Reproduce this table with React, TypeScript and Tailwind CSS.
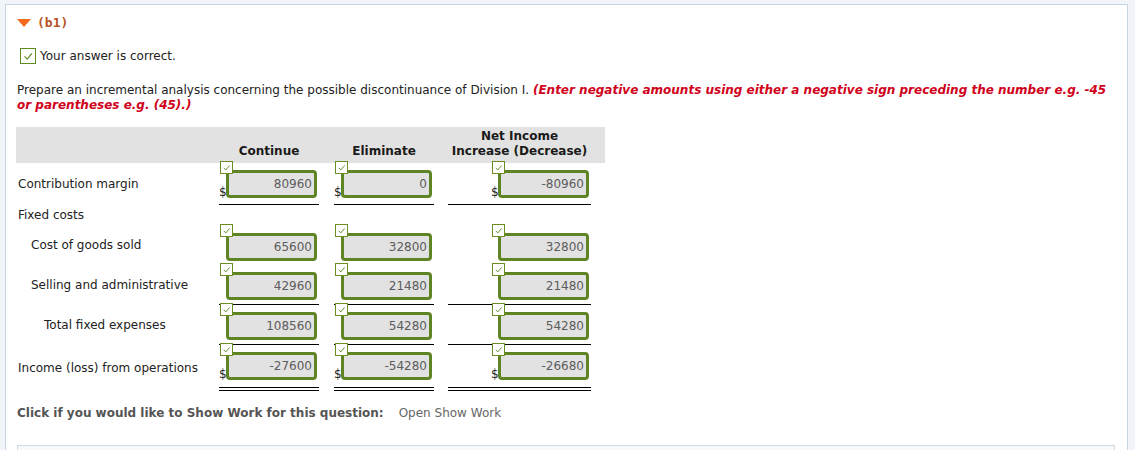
import React from 'react';

type Row = {
  label: string;
  indent: string;
  values?: [string, string, string];
  dollar?: boolean;
  line?: 'single' | 'double';
  pad: string;
};

const rows: Row[] = [
  { label: 'Contribution margin', indent: 'pl-[2px]', values: ['80960', '0', '-80960'], dollar: true, line: 'single', pad: 'pt-[7px] pb-[6px]' },
  { label: 'Fixed costs', indent: 'pl-[2px]', pad: 'h-[20px]' },
  { label: 'Cost of goods sold', indent: 'pl-[15px]', values: ['65600', '32800', '32800'], pad: 'pt-[8px] pb-[4px]' },
  { label: 'Selling and administrative', indent: 'pl-[15px]', values: ['42960', '21480', '21480'], line: 'single', pad: 'pt-[7px] pb-[4px]' },
  { label: 'Total fixed expenses', indent: 'pl-[28px]', values: ['108560', '54280', '54280'], line: 'single', pad: 'pt-[7px] pb-[4px]' },
  { label: 'Income (loss) from operations', indent: 'pl-[2px]', values: ['-27600', '-54280', '-26680'], dollar: true, line: 'double', pad: 'pt-[7px] pb-[7px]' },
];

const Tick = ({ size }: { size: number }) => (
  <svg width={size} height={size} viewBox="0 0 16 16">
    <path d="M4 8.5 L7 11.5 L12.5 5" fill="none" stroke="#5e8c21" strokeWidth="1.4" />
  </svg>
);

const AnswerBox = ({ value, dollar }: { value: string; dollar?: boolean }) => (
  <div className="relative mr-[2px] ml-auto w-[91px]">
    <span className="absolute left-[-6px] top-[-9px] z-10 flex h-[13px] w-[13px] items-center justify-center border border-[#6b8e23] bg-white">
      <Tick size={11} />
    </span>
    {dollar && <span className="absolute bottom-[0px] left-[-7px] text-[12px] leading-none text-[#222]">$</span>}
    <div className="flex h-[28px] w-[91px] items-center justify-end rounded-[4px] border-[3px] border-[#5f8424] bg-[#e2e2e2] pr-[2px] text-[12px] text-[#5c5c5c]">
      {value}
    </div>
  </div>
);

export default function App() {
  const lineClass = (r: Row) =>
    r.line === 'single' ? 'border-b border-black' : r.line === 'double' ? 'border-b-[4px] border-double border-black' : '';

  return (
    <div className="h-[450px] overflow-hidden bg-[#f1f5f9] pl-[5px] pt-[4px] pr-[7px] font-['DejaVu_Sans',sans-serif] text-[12px] text-[#222]">
      <div className="h-[460px] border-l border-t border-r border-[#c9d5e1] bg-white px-[11px] pt-[8px]">
        <div className="flex items-center gap-[6px]">
          <svg width="14" height="8" viewBox="0 0 14 8">
            <polygon points="0,0 14,0 7,8" fill="#f26b1d" />
          </svg>
          <span className="font-['DejaVu_Sans_Mono',monospace] text-[13px] font-bold text-[#b5541f]">(b1)</span>
        </div>

        <div className="mt-[14px] flex items-center gap-[4px] pl-[3px]">
          <span className="flex h-[16px] w-[16px] items-center justify-center border border-[#5e8c21] bg-white">
            <Tick size={14} />
          </span>
          <span>Your answer is correct.</span>
        </div>

        <div className="mt-[18px] w-[1100px] leading-[15px]">
          <span>Prepare an incremental analysis concerning the possible discontinuance of Division I. </span>
          <em className="font-bold text-[#d0021b]">
            (Enter negative amounts using either a negative sign preceding the number e.g. -45 or parentheses e.g. (45).)
          </em>
        </div>

        <div className="mt-[14px] w-[589px] -ml-[1px]">
          <div className="grid h-[36px] grid-cols-[203px_100px_15px_100px_14px_143px_14px] items-end bg-[#e2e2e2] pb-[4px] text-[12px] font-bold leading-[15px] text-[#1a1a1a]">
            <div />
            <div className="text-center">Continue</div>
            <div />
            <div className="text-center">Eliminate</div>
            <div />
            <div className="text-center">
              Net Income
              <br />
              Increase (Decrease)
            </div>
            <div />
          </div>

          {rows.map((r) => (
            <div key={r.label} className="grid grid-cols-[203px_100px_15px_100px_14px_143px_14px]">
              <div className={`flex items-center ${r.indent}`}>{r.label}</div>
              {r.values ? (
                <>
                  <div className={`${r.pad} ${lineClass(r)}`}>
                    <AnswerBox value={r.values[0]} dollar={r.dollar} />
                  </div>
                  <div />
                  <div className={`${r.pad} ${lineClass(r)}`}>
                    <AnswerBox value={r.values[1]} dollar={r.dollar} />
                  </div>
                  <div />
                  <div className={`${r.pad} ${lineClass(r)}`}>
                    <AnswerBox value={r.values[2]} dollar={r.dollar} />
                  </div>
                  <div />
                </>
              ) : (
                <div className={`col-span-6 ${r.pad}`} />
              )}
            </div>
          ))}
        </div>

        <div className="mt-[13px] flex gap-[15px]">
          <span className="font-bold text-[#555]">Click if you would like to Show Work for this question:</span>
          <span className="text-[#666]">Open Show Work</span>
        </div>

        <div className="mt-[23px] h-[20px] w-[1098px] border border-[#cfd9e3] bg-[#f7f9fb]" />
      </div>
    </div>
  );
}
